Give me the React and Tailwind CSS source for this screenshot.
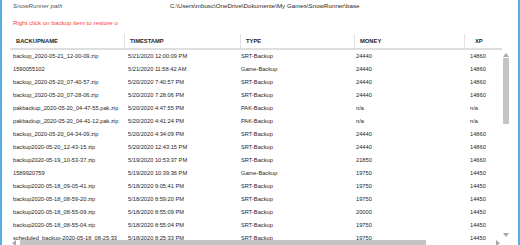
// Backup list window: path line, hint, and a details list view with scrollbars.

const rows = [
  ['backup_2020-05-21_12-00-09.zip', '5/21/2020 12:00:09 PM', 'SRT-Backup', '24440', '14860'],
  ['1590055102', '5/21/2020 11:58:42 AM', 'Game-Backup', '24440', '14860'],
  ['backup_2020-05-20_07-40-57.zip', '5/20/2020 7:40:57 PM', 'SRT-Backup', '24440', '14860'],
  ['backup_2020-05-20_07-28-06.zip', '5/20/2020 7:28:06 PM', 'SRT-Backup', '24440', '14860'],
  ['pakbackup_2020-05-20_04-47-55.pak.zip', '5/20/2020 4:47:55 PM', 'PAK-Backup', 'n/a', 'n/a'],
  ['pakbackup_2020-05-20_04-41-12.pak.zip', '5/20/2020 4:41:24 PM', 'PAK-Backup', 'n/a', 'n/a'],
  ['backup_2020-05-20_04-34-09.zip', '5/20/2020 4:34:09 PM', 'SRT-Backup', '24440', '14860'],
  ['backup2020-05-20_12-43-15.zip', '5/20/2020 12:43:15 PM', 'SRT-Backup', '24440', '14860'],
  ['backup2020-05-19_10-53-37.zip', '5/19/2020 10:53:37 PM', 'SRT-Backup', '21850', '14660'],
  ['1589920759', '5/19/2020 10:39:36 PM', 'Game-Backup', '19750', '14450'],
  ['backup2020-05-18_09-05-41.zip', '5/18/2020 9:05:41 PM', 'SRT-Backup', '19750', '14450'],
  ['backup2020-05-18_08-59-20.zip', '5/18/2020 8:59:20 PM', 'SRT-Backup', '19750', '14450'],
  ['backup2020-05-18_08-55-09.zip', '5/18/2020 8:55:09 PM', 'SRT-Backup', '20000', '14450'],
  ['backup2020-05-18_08-55-04.zip', '5/18/2020 8:55:04 PM', 'SRT-Backup', '19750', '14450'],
  ['scheduled_backup-2020-05-18_08-25:33', '5/18/2020 8:25:33 PM', 'SRT-Backup', '19750', '14450'],
];

const headers = ['BACKUPNAME', 'TIMESTAMP', 'TYPE', 'MONEY', 'XP'];

function Arrow({ dir }) {
  const pts = {
    up: '0,4 3,0 6,4',
    down: '0,0 6,0 3,4',
    left: '4,0 4,6 0,3',
    right: '0,0 0,6 4,3',
  }[dir];
  const vertical = dir === 'up' || dir === 'down';
  return (
    <svg width={vertical ? 6 : 4} height={vertical ? 4 : 6} viewBox={vertical ? '0 0 6 4' : '0 0 4 6'}>
      <polygon points={pts} fill="#a8a8a8" />
    </svg>
  );
}

export default function App() {
  return (
    <div
      className="w-[520px] h-[245px] overflow-hidden bg-white border-l-2 border-r-2 border-[#5aaee6] flex flex-col pt-[1px] text-[#1e1e1e]"
      style={{ fontFamily: '"Liberation Sans", Arial, sans-serif' }}
    >
      {/* path line */}
      <div className="flex h-[10px] items-center text-[6.2px] leading-none pl-[11px]">
        <span className="italic text-[#555] w-[157px]">SnowRunner path</span>
        <span>C:\Users\mbusc\OneDrive\Dokumente\My Games\SnowRunner\base</span>
      </div>

      <div className="mt-[8px] h-[10px] flex items-center pl-[11px] text-[6.2px] leading-none text-[#ff3b3b]">
        Right click on backup item to restore o
      </div>

      {/* list view */}
      <div className="mt-[6px] flex flex-col">
        <div className="ml-[8px] w-[492px] h-[16px] grid grid-cols-[114px_116px_114px_110px_1fr] border-b-2 border-[#dedede] text-[5.8px] font-bold leading-none">
          {headers.map((h, i) => (
            <div
              key={h}
              className={`flex items-center pt-[1px] ${i === 0 ? 'pl-[6px]' : 'border-l border-[#e3e3e3]'} ${i === 4 ? 'pl-[10px]' : i > 0 ? 'pl-[5px]' : ''}`}
            >
              {h}
            </div>
          ))}
        </div>

        <div className="flex h-[190px] overflow-hidden">
          <div className="ml-[11px] w-[489px] flex flex-col text-[5.7px] leading-none">
            {rows.map((r, idx) => (
              <div key={idx} className="h-[13px] shrink-0 grid grid-cols-[115px_113px_115px_114px_1fr] items-center">
                {r.map((c, j) => (
                  <div key={j} className="whitespace-nowrap overflow-hidden">{c}</div>
                ))}
              </div>
            ))}
          </div>

          {/* vertical scrollbar */}
          <div className="ml-[1px] w-[6px] flex flex-col items-center pt-[3px]">
            <Arrow dir="up" />
            <div className="mt-[1px] w-[6px] h-[66px] bg-[#c4c4c4]" />
            <div className="flex-1" />
            <div className="mb-[3px]"><Arrow dir="down" /></div>
          </div>
        </div>

        {/* horizontal scrollbar */}
        <div className="h-[5px] flex items-start">
          <div className="ml-[10px]"><Arrow dir="left" /></div>
          <div className="ml-[4px] w-[406px] h-[5px] bg-[#c4c4c4]" />
          <div className="ml-[70px]"><Arrow dir="right" /></div>
        </div>
      </div>
    </div>
  );
}
